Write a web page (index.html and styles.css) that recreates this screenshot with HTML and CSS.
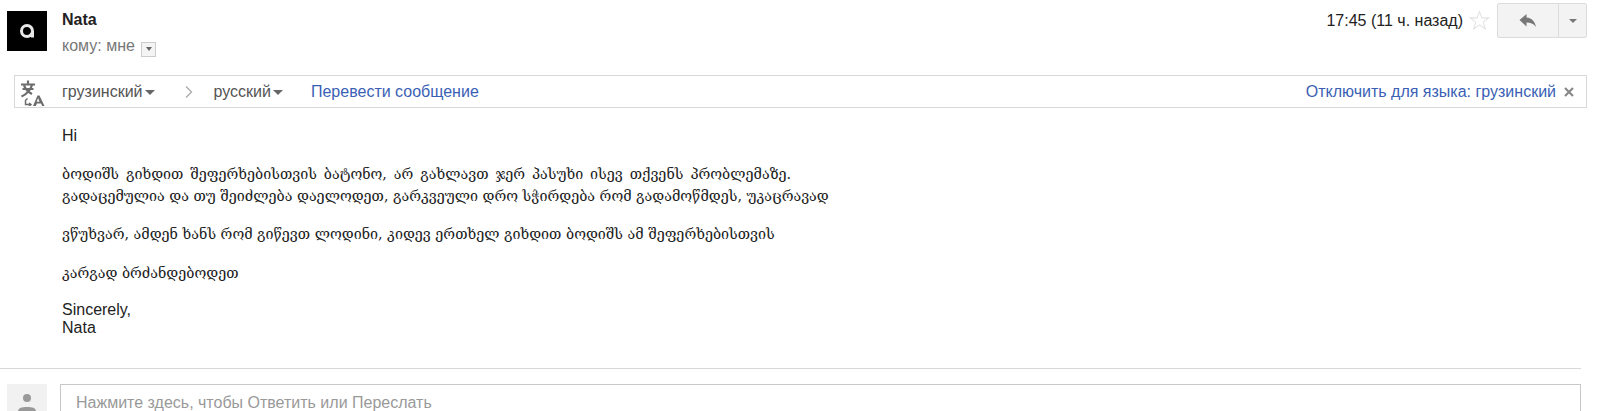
FILE: index.html
```html
<!DOCTYPE html>
<html lang="ru">
<head>
    <meta charset="UTF-8">
    <title>Nata</title>
    <link rel="stylesheet" href="styles.css">
</head>
<body>
  <header class="msg-head">
    <div class="avatar">
      <svg width="40" height="40" viewBox="0 0 40 40"><path d="M14.500 20a5.500 5.500 0 1 0 11 0a5.500 5.500 0 1 0-11 0M25.500 20v6.500" fill="none" stroke="#e8e8e8" stroke-width="3"/></svg>
    </div>
    <div class="sender">
      <div class="sender-name">Nata</div>
      <div class="sender-to">кому: мне <span class="to-more"><i class="tri tri-small"></i></span></div>
    </div>
    <div class="head-right">
      <span class="time">17:45 (11 ч. назад)</span>
      <svg class="star" width="21" height="21" viewBox="0 0 20 20"><path d="M10 1.500l2.400 6h6.300l-5.100 4 1.900 6.500-5.500-3.800-5.500 3.800 1.900-6.500-5.100-4h6.300z" fill="none" stroke="#e2e2e2"/></svg>
      <div class="reply-btn">
        <span class="reply-main">
          <svg width="18" height="15" viewBox="0 0 18 14"><path d="M7.500 0.500L0.500 6.500l7 6.500V9c4 0 7 1 9.500 4.500C16 8 13 4.500 7.500 4z" fill="#777"/></svg>
        </span>
        <span class="reply-more"><i class="tri"></i></span>
      </div>
    </div>
  </header>

  <div class="translate-bar">
    <svg class="translate-icon" width="26" height="28" viewBox="0 0 26 28">
      <path d="M1 6.500h14M8 2.500v4M12 7c-1.500 5-5 9-10.500 11.500M4 7.500c1.500 3.500 4 6.500 8 8.500M2.500 11h11" fill="none" stroke="#6c6c6c" stroke-width="2.200"/>
      <path d="M7.500 20.500L5.500 22.500v4h5M9 25l2 1.500-2 1.500" fill="none" stroke="#6c6c6c" stroke-width="1.500"/>
      <path d="M13 28l4.500-10.500h2L24.500 28h-2.400l-1-2.500h-4.200l-1 2.500zM16.700 23.700h2.800l-1.400-3.600z" fill="#6c6c6c"/>
    </svg>
    <span class="lang lang-from">грузинский<i class="tri"></i></span>
    <svg class="chevron" width="8" height="14" viewBox="0 0 8 14"><path d="M1 1.500L6.500 7 1 12.500" fill="none" stroke="#aaa" stroke-width="1.300"/></svg>
    <span class="lang lang-to">русский<i class="tri"></i></span>
    <a class="link link-translate">Перевести сообщение</a>
    <a class="link link-off">Отключить для языка: грузинский</a>
    <svg class="close" width="10" height="10" viewBox="0 0 10 10"><path d="M1 1l8 8M9 1l-8 8" stroke="#888" stroke-width="2.200"/></svg>
  </div>

  <article class="msg-body">
    <p>Hi</p>
    <p class="ka"><span class="ka-wide">ბოდიშს გიხდით შეფერხებისთვის ბატონო, არ გახლავთ ჯერ პასუხი ისევ თქვენს პრობლემაზე.</span><br>
    გადაცემულია და თუ შეიძლება დაელოდეთ, გარკვეული დრო სჭირდება რომ გადამოწმდეს, უკაცრავად</p>
    <p class="ka">ვწუხვარ, ამდენ ხანს რომ გიწევთ ლოდინი, კიდევ ერთხელ გიხდით ბოდიშს ამ შეფერხებისთვის</p>
    <p class="ka">კარგად ბრძანდებოდეთ</p>
    <p>Sincerely,<br>Nata</p>
  </article>

  <hr class="divider">

  <footer class="reply-row">
    <div class="me">
      <svg width="40" height="40" viewBox="0 0 40 40"><circle cx="20" cy="14" r="4" fill="#999"/><path d="M11 37v-9c0-4 3-5 9-5s9 1 9 5v9z" fill="#999"/></svg>
    </div>
    <div class="reply-box">Нажмите здесь, чтобы Ответить или Переслать</div>
  </footer>
</body>
</html>
```
FILE: styles.css
```css
html, body {
    height: 411px;
    overflow: hidden;
}

body {
    margin: 0;
    background-color: #fff;
    color: #222;
    font-family: "Liberation Sans", Arial, sans-serif;
    font-size: 16px;
}

/* header */
.msg-head {
    display: flex;
    height: 75px;
    padding: 11px 21px 0 7px;
    box-sizing: border-box;
}

.avatar {
    width: 40px;
    height: 40px;
    background-color: #000;
}

.sender {
    margin-left: 15px;
    flex: 1;
}

.sender-name {
    font-weight: bold;
    line-height: 18px;
}

.sender-to {
    color: #777;
    line-height: 18px;
    margin-top: 8px;
}

.to-more {
    display: inline-flex;
    align-items: center;
    justify-content: center;
    width: 13px;
    height: 13px;
    margin-left: 2px;
    border: 1px solid #ccc;
    background-color: #f4f4f4;
    vertical-align: 0;
}

.tri {
    display: inline-block;
    border-style: solid;
    border-width: 5px 5px 0 5px;
    border-color: #666 transparent transparent transparent;
}

.tri-small {
    border-width: 4px 3.500px 0 3.500px;
}

.head-right {
    display: flex;
    align-items: flex-start;
    margin-top: -8px;
}

.time {
    margin-top: 8px;
    line-height: 20px;
}

.star {
    margin: 7px 7px 0 6px;
}

.reply-btn {
    display: flex;
    height: 33px;
    border: 1px solid #dcdcdc;
    border-radius: 2px;
    background-color: #f3f3f3;
}

.reply-main {
    display: flex;
    align-items: center;
    justify-content: center;
    width: 60px;
    border-right: 1px solid #dcdcdc;
}

.reply-more {
    display: flex;
    align-items: center;
    justify-content: center;
    width: 27px;
}

.reply-more .tri {
    border-width: 4px 4px 0 4px;
    border-color: #777 transparent transparent transparent;
}

/* translate bar */
.translate-bar {
    display: flex;
    align-items: center;
    height: 33px;
    margin: 0 21px 0 14px;
    border: 1px solid #d8d8d8;
    box-sizing: border-box;
}

.translate-icon {
    margin-left: 5px;
    flex: none;
}

.lang {
    color: #555;
}

.lang .tri {
    margin-left: 2px;
    vertical-align: 2px;
}

.lang-from {
    margin-left: 16px;
}

.chevron {
    margin: 0 21px 0 30px;
}

.link {
    color: #3a5fb5;
}

.link-translate {
    margin-left: 28px;
    flex: 1;
}

.close {
    margin: 1px 12px 0 8px;
}

/* message text */
.msg-body {
    padding: 19px 0 0 62px;
    height: 260px;
    box-sizing: border-box;
}

.msg-body p {
    margin: 0 0 19px;
    line-height: 18px;
}

.msg-body .ka {
    font-family: "DejaVu Serif", "DejaVu Sans", serif;
    font-size: 14.300px;
    line-height: 21.500px;
    margin-bottom: 17px;
}

/* first line runs wider in the original */
.ka-wide {
    word-spacing: 2.400px;
}

.divider {
    height: 1px;
    border: 0;
    margin: 0 27px 15px 0;
    background-color: #d8d8d8;
}

/* reply */
.reply-row {
    display: flex;
    height: 27px;
    padding-left: 7px;
    overflow: hidden;
}

.me {
    flex: none;
    width: 40px;
    height: 40px;
    background-color: #f1f1f1;
}

.reply-box {
    flex: none;
    width: 1521px;
    height: 60px;
    margin-left: 13px;
    padding: 9px 15px;
    box-sizing: border-box;
    border: 1px solid #c8c8c8;
    border-bottom: 0;
    color: #999;
}
```
